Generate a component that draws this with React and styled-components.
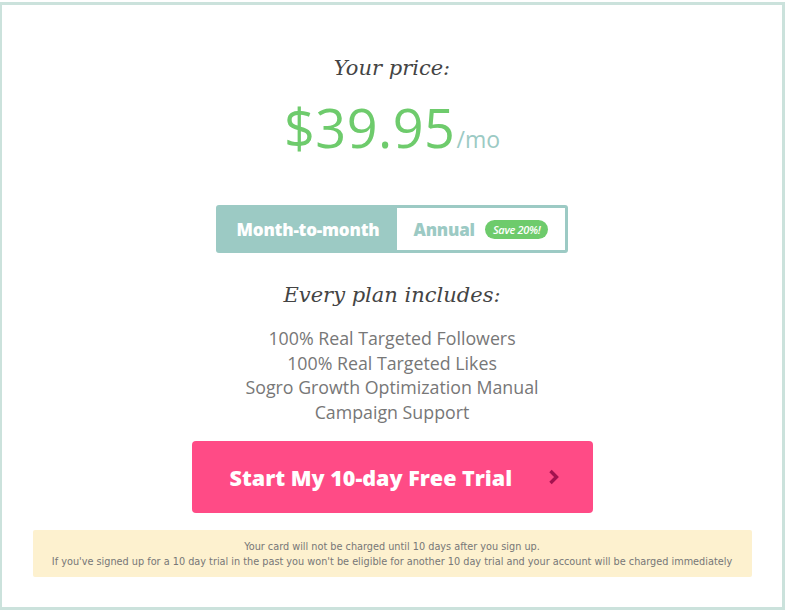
import React from "react";
import styled, { createGlobalStyle } from "styled-components";

const Global = createGlobalStyle`
  html, body {
    margin: 0;
    padding: 0;
    background: #fff;
    overflow: hidden;
  }
`;

const Card = styled.div`
  box-sizing: border-box;
  width: 786px;
  height: 608px;
  margin: 2px 0 0 -1px;
  border: 3px solid #cbe2dc;
  background: #fff;
  display: flex;
  flex-direction: column;
  align-items: center;
  padding-top: 49px;
`;

const Serif = styled.div`
  font-family: "DejaVu Serif", "Liberation Serif", serif;
  font-style: italic;
  font-size: 21px;
  color: #444;
  line-height: 28px;
`;

const PriceRow = styled.div`
  display: flex;
  align-items: baseline;
  margin-top: 14px;
  font-family: "Open Sans", "Liberation Sans", sans-serif;
  line-height: 62px;
`;

const Amount = styled.span`
  font-size: 54px;
  color: #6ecb6c;
  letter-spacing: 0.5px;
`;

const Per = styled.span`
  font-size: 23px;
  color: #9ccac4;
  margin-left: 1px;
`;

const Toggle = styled.div`
  display: flex;
  margin-top: 35px;
  width: 352px;
  height: 48px;
  box-sizing: border-box;
  padding: 3px;
  background: #9ccac4;
  border-radius: 3px;
  font-family: "Open Sans", "Liberation Sans", sans-serif;
  font-weight: 800;
`;

const Option = styled.div`
  display: flex;
  align-items: center;
  justify-content: center;
  gap: 10px;
  flex: ${(p) => (p.$active ? "0 0 178px" : "1")};
  background: ${(p) => (p.$active ? "transparent" : "#fff")};
  color: ${(p) => (p.$active ? "#fff" : "#9ccac4")};
  font-size: 17px;
  letter-spacing: -0.2px;
`;

const Badge = styled.span`
  background: #6ecb6c;
  color: #fff;
  border-radius: 10px;
  padding: 3px 8px;
  font-size: 11px;
  line-height: 13px;
  font-style: italic;
  font-weight: 600;
  letter-spacing: -0.3px;
`;

const Heading = styled(Serif)`
  margin-top: 28px;
`;

const List = styled.ul`
  list-style: none;
  margin: 17px 0 0;
  padding: 0;
  text-align: center;
  font-family: "Open Sans", "Liberation Sans", sans-serif;
  font-size: 17.8px;
  line-height: 24.5px;
  color: #777;
`;

const CTA = styled.button`
  margin-top: 17px;
  width: 401px;
  height: 72px;
  border: none;
  border-radius: 4px;
  background: #ff4b86;
  color: #fff;
  font-family: "Open Sans", "Liberation Sans", sans-serif;
  font-weight: 800;
  font-size: 21.5px;
  display: flex;
  align-items: center;
  padding: 0 33px 0 38px;
  justify-content: space-between;
`;

const Notice = styled.div`
  margin-top: 17px;
  width: 719px;
  height: 47px;
  box-sizing: border-box;
  padding-top: 9px;
  background: #fdf1cf;
  border-radius: 2px;
  text-align: center;
  font-family: "DejaVu Sans Condensed", "DejaVu Sans", sans-serif;
  font-stretch: condensed;
  font-size: 10.8px;
  line-height: 15px;
  color: #777;
`;

const Chevron = () => (
  <svg width="12" height="16" viewBox="0 0 12 16">
    <path d="M2.5 2 L8.5 8 L2.5 14" fill="none" stroke="#a3124f" strokeWidth="3.4" />
  </svg>
);

export default function App() {
  return (
    <>
      <Global />
      <Card>
        <Serif>Your price:</Serif>
        <PriceRow>
          <Amount>$39.95</Amount>
          <Per>/mo</Per>
        </PriceRow>
        <Toggle>
          <Option $active>Month-to-month</Option>
          <Option>
            Annual <Badge>Save 20%!</Badge>
          </Option>
        </Toggle>
        <Heading>Every plan includes:</Heading>
        <List>
          <li>100% Real Targeted Followers</li>
          <li>100% Real Targeted Likes</li>
          <li>Sogro Growth Optimization Manual</li>
          <li>Campaign Support</li>
        </List>
        <CTA>
          <span>Start My 10-day Free Trial</span>
          <Chevron />
        </CTA>
        <Notice>
          Your card will not be charged until 10 days after you sign up.
          <br />
          If you've signed up for a 10 day trial in the past you won't be
          eligible for another 10 day trial and your account will be charged
          immediately
        </Notice>
      </Card>
    </>
  );
}
